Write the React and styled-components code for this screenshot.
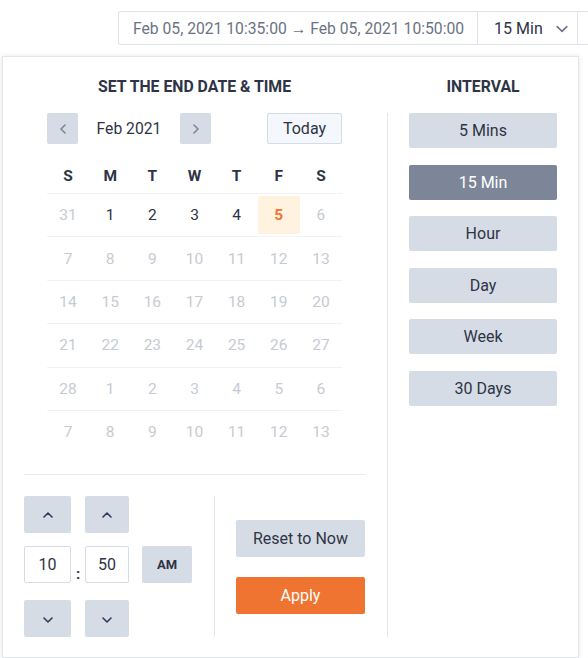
import styled, { createGlobalStyle } from "styled-components";

const GlobalStyle = createGlobalStyle`
  body {
    margin: 0;
    background: #ffffff;
    font-family: Roboto, "Liberation Sans", sans-serif;
    color: #2e3446;
  }
`;

const Page = styled.div`
  width: 588px;
  height: 658px;
  overflow: hidden;
`;

const TopBar = styled.div`
  display: flex;
  padding: 11px 0 0 118px;
  height: 34px;
`;

const RangeBox = styled.div`
  display: flex;
  align-items: stretch;
  border: 1px solid #dfe3ea;
  border-right: none;
  border-radius: 3px 0 0 3px;
  background: #fff;
`;

const RangeText = styled.div`
  display: flex;
  align-items: center;
  padding: 0 13px 0 14px;
  font-size: 15.7px;
  color: #6c7383;
  border-right: 1px solid #dfe3ea;
  white-space: nowrap;
`;

const IntervalPick = styled.div`
  display: flex;
  align-items: center;
  gap: 13px;
  padding: 0 9px 0 16px;
  font-size: 16px;
  color: #2e3446;
  border-right: 1px solid #dfe3ea;
`;

const Stub = styled.div`
  flex: 1;
  border-top: 1px solid #dfe3ea;
  border-bottom: 1px solid #dfe3ea;
`;

const Popover = styled.div`
  display: flex;
  margin: 11px 0 0 2px;
  width: 575px;
  border: 1px solid #e1e5ec;
  background: #fff;
  box-shadow: 0 0 5px rgba(40, 50, 80, 0.12);
`;

const LeftPanel = styled.div`
  width: 341px;
  padding: 21px 22px 20px 21px;
`;

const Title = styled.div`
  font-size: 15.8px;
  line-height: 18px;
  font-weight: 700;
  text-align: center;
  color: #2e3446;
`;

const Calendar = styled.div`
  width: 295px;
  margin: 17px auto 0;
`;

const NavRow = styled.div`
  display: flex;
  align-items: center;
  height: 31px;
`;

const NavButton = styled.button`
  width: 31px;
  height: 31px;
  border: none;
  border-radius: 2px;
  background: #d6dce5;
  display: flex;
  align-items: center;
  justify-content: center;
  padding: 0;
`;

const MonthLabel = styled.div`
  width: 102px;
  text-align: center;
  font-size: 15.7px;
  color: #2e3446;
`;

const TodayButton = styled.button`
  margin-left: auto;
  width: 75px;
  height: 31px;
  border: 1px solid #d6dce5;
  border-radius: 2px;
  background: #f4f7fb;
  font-family: inherit;
  font-size: 16px;
  color: #2e3446;
`;

const Weekdays = styled.div`
  display: grid;
  grid-template-columns: repeat(7, 1fr);
  margin-top: 15px;
  height: 34px;
  align-items: center;
  text-align: center;
  font-size: 15.5px;
  font-weight: 700;
  color: #2e3446;
`;

const Week = styled.div`
  display: grid;
  grid-template-columns: repeat(7, 1fr);
  height: 43.4px;
  border-top: 1px solid #f0f2f6;
  box-sizing: border-box;
  padding: 2px 0;
`;

const Day = styled.div`
  display: flex;
  align-items: center;
  justify-content: center;
  font-size: 15.5px;
  border-radius: 2px;
  color: ${(p) => (p.$selected ? "#f07431" : p.$muted ? "#c6cbd3" : "#2e3446")};
  font-weight: ${(p) => (p.$selected ? 700 : 400)};
  background: ${(p) => (p.$selected ? "#fff3e0" : "transparent")};
`;

const Rule = styled.div`
  height: 1px;
  background: #e6e9ef;
  margin-top: 21px;
`;

const Bottom = styled.div`
  display: flex;
  margin-top: 21px;
  height: 141px;
`;

const TimeGrid = styled.div`
  display: grid;
  grid-template-columns: 47px 14px 44px 13px 50px;
  grid-template-rows: 37px 13px 37px 17px 37px;
`;

const StepButton = styled.button`
  grid-column: ${(p) => p.$col};
  grid-row: ${(p) => p.$row};
  border: none;
  border-radius: 2px;
  background: #d6dce5;
  display: flex;
  align-items: center;
  justify-content: center;
  padding: 0;
`;

const TimeInput = styled.div`
  grid-column: ${(p) => p.$col};
  grid-row: 3;
  border: 1px solid #d6dce5;
  border-radius: 2px;
  display: flex;
  align-items: center;
  justify-content: center;
  font-size: 16px;
  color: #2e3446;
`;

const Colon = styled.div`
  grid-column: 2;
  grid-row: 3;
  display: flex;
  align-items: flex-end;
  justify-content: center;
  font-size: 15px;
  font-weight: 700;
  line-height: 1;
  padding-bottom: 1px;
`;

const AmButton = styled.button`
  grid-column: 5;
  grid-row: 3;
  border: none;
  border-radius: 2px;
  background: #d6dce5;
  font-family: inherit;
  font-size: 13px;
  font-weight: 700;
  color: #2e3446;
`;

const VLine = styled.div`
  width: 1px;
  background: #e3e6ec;
  margin: 0 21px 0 22px;
`;

const Actions = styled.div`
  flex: 1;
  display: flex;
  flex-direction: column;
  justify-content: center;
  gap: 20px;
`;

const ActionButton = styled.button`
  height: 37px;
  border: none;
  border-radius: 2px;
  font-family: inherit;
  font-size: 16px;
  background: ${(p) => (p.$primary ? "#f07431" : "#d6dce5")};
  color: ${(p) => (p.$primary ? "#ffffff" : "#2e3446")};
`;

const PanelDivider = styled.div`
  width: 1px;
  background: #e3e6ec;
  margin: 56px 0 20px 0;
`;

const RightPanel = styled.div`
  flex: 1;
  padding-top: 21px;
  display: flex;
  flex-direction: column;
  align-items: center;
`;

const IntervalList = styled.div`
  display: flex;
  flex-direction: column;
  gap: 16.6px;
  margin-top: 17px;
`;

const IntervalButton = styled.button`
  width: 148px;
  height: 35px;
  border: none;
  border-radius: 2px;
  font-family: inherit;
  font-size: 16px;
  background: ${(p) => (p.$active ? "#7c8698" : "#d6dce5")};
  color: ${(p) => (p.$active ? "#ffffff" : "#2e3446")};
`;

const Chevron = ({ dir, color = "#2e3a58", size = 10, weight = 1.6 }) => {
  const paths = {
    left: "M6 1 L2 5 L6 9",
    right: "M2 1 L6 5 L2 9",
    up: "M1 6 L5 2 L9 6",
    down: "M1 3 L5 7 L9 3",
  };
  const horiz = dir === "left" || dir === "right";
  return (
    <svg width={horiz ? size * 0.8 : size} height={horiz ? size : size * 0.8} viewBox={horiz ? "0 0 8 10" : "0 0 10 8"}>
      <path d={paths[dir]} fill="none" stroke={color} strokeWidth={weight} strokeLinecap="round" strokeLinejoin="round" />
    </svg>
  );
};

const weeks = [
  [31, 1, 2, 3, 4, 5, 6],
  [7, 8, 9, 10, 11, 12, 13],
  [14, 15, 16, 17, 18, 19, 20],
  [21, 22, 23, 24, 25, 26, 27],
  [28, 1, 2, 3, 4, 5, 6],
  [7, 8, 9, 10, 11, 12, 13],
];

const intervals = ["5 Mins", "15 Min", "Hour", "Day", "Week", "30 Days"];

export default function App() {
  return (
    <Page>
      <GlobalStyle />
      <TopBar>
        <RangeBox>
          <RangeText>Feb 05, 2021 10:35:00 → Feb 05, 2021 10:50:00</RangeText>
          <IntervalPick>
            15 Min
            <Chevron dir="down" color="#6c7383" size={12} weight={1.3} />
          </IntervalPick>
        </RangeBox>
        <Stub />
      </TopBar>
      <Popover>
        <LeftPanel>
          <Title>SET THE END DATE &amp; TIME</Title>
          <Calendar>
            <NavRow>
              <NavButton>
                <Chevron dir="left" color="#7c8698" size={10} />
              </NavButton>
              <MonthLabel>Feb 2021</MonthLabel>
              <NavButton>
                <Chevron dir="right" color="#7c8698" size={10} />
              </NavButton>
              <TodayButton>Today</TodayButton>
            </NavRow>
            <Weekdays>
              {["S", "M", "T", "W", "T", "F", "S"].map((d, i) => (
                <div key={i}>{d}</div>
              ))}
            </Weekdays>
            {weeks.map((w, wi) => (
              <Week key={wi}>
                {w.map((d, di) => {
                  const active = wi === 0 && di >= 1 && di <= 5;
                  return (
                    <Day key={di} $muted={!active} $selected={wi === 0 && di === 5}>
                      {d}
                    </Day>
                  );
                })}
              </Week>
            ))}
          </Calendar>
          <Rule />
          <Bottom>
            <TimeGrid>
              <StepButton $col={1} $row={1}>
                <Chevron dir="up" />
              </StepButton>
              <StepButton $col={3} $row={1}>
                <Chevron dir="up" />
              </StepButton>
              <TimeInput $col={1}>10</TimeInput>
              <Colon>:</Colon>
              <TimeInput $col={3}>50</TimeInput>
              <AmButton>AM</AmButton>
              <StepButton $col={1} $row={5}>
                <Chevron dir="down" />
              </StepButton>
              <StepButton $col={3} $row={5}>
                <Chevron dir="down" />
              </StepButton>
            </TimeGrid>
            <VLine />
            <Actions>
              <ActionButton>Reset to Now</ActionButton>
              <ActionButton $primary>Apply</ActionButton>
            </Actions>
          </Bottom>
        </LeftPanel>
        <PanelDivider />
        <RightPanel>
          <Title>INTERVAL</Title>
          <IntervalList>
            {intervals.map((label) => (
              <IntervalButton key={label} $active={label === "15 Min"}>
                {label}
              </IntervalButton>
            ))}
          </IntervalList>
        </RightPanel>
      </Popover>
    </Page>
  );
}
